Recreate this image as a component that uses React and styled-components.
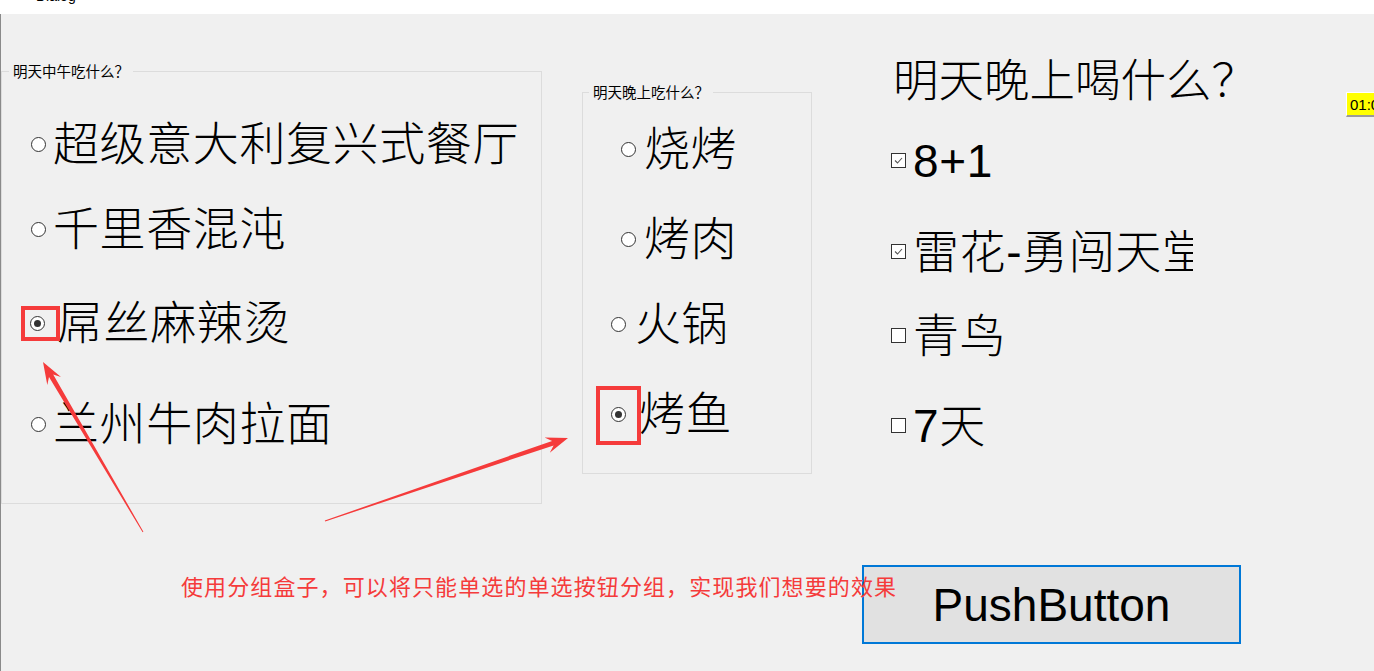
import React from "react";
import styled, { createGlobalStyle } from "styled-components";

const Global = createGlobalStyle`
  html, body { margin: 0; padding: 0; background: #f0f0f0; overflow: hidden; }
  * { box-sizing: border-box; }
`;

const FONT = `"Liberation Sans", "Noto Sans CJK SC", sans-serif`;

const Window = styled.div`
  position: relative;
  width: 1374px;
  height: 671px;
  overflow: hidden;
  display: flex;
  flex-direction: column;
  background: #f0f0f0;
  font-family: ${FONT};
  color: #000;
`;

const TitleBar = styled.div`
  flex: none;
  height: 14px;
  background: #fff;
  overflow: hidden;
`;

const TitleInner = styled.div`
  height: 22px;
  margin-top: -20px;
  display: flex;
  align-items: flex-end;
  padding-left: 10px;
`;

const AppIcon = styled.div`
  width: 18px;
  height: 16px;
  border: 1px solid #a8a8a8;
  background: #fff;
  margin-bottom: 2px;
`;

const TitleText = styled.span`
  margin-left: 8px;
  font-size: 14px;
  line-height: 1;
  font-family: "Liberation Sans", sans-serif;
  margin-bottom: -1px;
`;

const CloseGlyph = styled.span`
  margin-left: auto;
  margin-right: 42px;
  font-size: 13px;
  line-height: 1;
`;

const Content = styled.div`
  position: relative;
  flex: 1;
  border-left: 1px solid #8a8a8a;
  display: flex;
  flex-direction: column;
`;

const TopRow = styled.div`
  display: flex;
  align-items: flex-start;
`;

const GroupBox = styled.div`
  position: relative;
  flex: none;
  width: ${(p) => p.$w}px;
  height: ${(p) => p.$h}px;
  margin-top: ${(p) => p.$mt}px;
  margin-left: ${(p) => p.$ml}px;
  border: 1px solid #dcdcdc;
  display: flex;
  flex-direction: column;
`;

const GroupTitle = styled.span`
  position: absolute;
  top: -10px;
  left: ${(p) => p.$left}px;
  padding: 0 4px;
  background: #f0f0f0;
  font-family: "Noto Sans CJK SC", sans-serif;
  font-size: 14.5px;
  line-height: 18px;
  color: #000;
`;

const Row = styled.div`
  flex: none;
  height: 46px;
  display: flex;
  align-items: center;
  margin-top: ${(p) => p.$mt}px;
  padding-left: ${(p) => p.$pl || 0}px;
`;

const Radio = styled.span`
  position: relative;
  flex: none;
  width: 15px;
  height: 15px;
  border-radius: 50%;
  border: 1px solid #333;
  background: #fff;
  &::after {
    content: "";
    display: ${(p) => (p.$checked ? "block" : "none")};
    position: absolute;
    inset: 3px;
    border-radius: 50%;
    background: #333;
  }
`;

const CheckBox = styled.span`
  flex: none;
  width: 15px;
  height: 15px;
  border: 1px solid #333;
  background: #fff;
  display: flex;
  align-items: center;
  justify-content: center;
`;

const Label = styled.span`
  flex: none;
  margin-left: ${(p) => p.$gap}px;
  font-size: 46px;
  line-height: 1;
  font-weight: 300;
  letter-spacing: 0.6px;
  white-space: nowrap;
`;

const RightColumn = styled.div`
  flex: none;
  margin-left: 79px;
  display: flex;
  flex-direction: column;
`;

const Heading = styled.div`
  margin-top: 45px;
  margin-left: 2px;
  font-size: 45.5px;
  line-height: 1;
  font-weight: 300;
  white-space: nowrap;
`;

const CheckRow = styled(Row)`
  width: 302px;
  height: 60px;
  overflow: hidden;
`;

const Timer = styled.div`
  position: absolute;
  top: 78px;
  left: 1345px;
  height: 25px;
  padding: 0 3px;
  display: flex;
  align-items: center;
  background: #ffff00;
  border-top: 1px solid #fff;
  border-left: 1px solid #fff;
  border-bottom: 2px solid #9a9a9a;
  font-size: 15px;
  font-family: "Liberation Sans", sans-serif;
  white-space: nowrap;
`;

const BottomRow = styled.div`
  display: flex;
  align-items: flex-start;
  margin-top: 61px;
`;

const Note = styled.div`
  position: relative;
  z-index: 1;
  flex: 1 1 0;
  min-width: 0;
  margin-left: 180px;
  margin-top: 9px;
  font-family: "Noto Sans CJK SC", sans-serif;
  font-size: 22px;
  line-height: 1;
  color: #f53b3b;
  letter-spacing: 1.1px;
  white-space: nowrap;
`;

const PushButton = styled.button`
  flex: none;
  margin-right: 133px;
  width: 379px;
  height: 79px;
  border: 2px solid #0078d7;
  background: #e1e1e1;
  font-family: "Liberation Sans", sans-serif;
  font-size: 46px;
  color: #000;
  padding: 0;
  cursor: default;
`;

const Overlay = styled.svg`
  position: absolute;
  top: 0;
  left: 0;
  width: 1374px;
  height: 671px;
  pointer-events: none;
  z-index: 5;
`;

function arrowPoints(x1, y1, x2, y2) {
  const dx = x2 - x1;
  const dy = y2 - y1;
  const len = Math.hypot(dx, dy);
  const ux = dx / len;
  const uy = dy / len;
  const nx = -uy;
  const ny = ux;
  const L = 22;
  const W = 8;
  const w = 2.4;
  const bx = x2 - ux * L;
  const by = y2 - uy * L;
  const sx = x2 - ux * (L - 6);
  const sy = y2 - uy * (L - 6);
  const pts = [
    [x1 + nx * 0.5, y1 + ny * 0.5],
    [sx + nx * w, sy + ny * w],
    [bx + nx * W, by + ny * W],
    [x2, y2],
    [bx - nx * W, by - ny * W],
    [sx - nx * w, sy - ny * w],
    [x1 - nx * 0.5, y1 - ny * 0.5],
  ];
  return pts.map((p) => p.map((v) => v.toFixed(1)).join(",")).join(" ");
}

const CheckMark = () => (
  <svg width="11" height="11" viewBox="0 0 11 11">
    <polyline points="2,5.5 4.5,8 9,3" fill="none" stroke="#555" strokeWidth="1.1" />
  </svg>
);

const lunch = [
  { text: "超级意大利复兴式餐厅", mt: 49, pl: 29, gap: 7 },
  { text: "千里香混沌", mt: 39, pl: 29, gap: 7 },
  { text: "屌丝麻辣烫", mt: 48, pl: 28, gap: 12, checked: true },
  { text: "兰州牛肉拉面", mt: 55, pl: 29, gap: 7 },
];

const dinner = [
  { text: "烧烤", mt: 33, pl: 38, gap: 8 },
  { text: "烤肉", mt: 44, pl: 38, gap: 8 },
  { text: "火锅", mt: 39, pl: 28, gap: 9 },
  { text: "烤鱼", mt: 44, pl: 28, gap: 13, checked: true },
];

const drinks = [
  { text: "8+1", mt: 26, checked: true },
  { text: "雷花-勇闯天堂", mt: 31, checked: true },
  { text: "青鸟", mt: 24 },
  { text: "7天", mt: 30 },
];

export default function App() {
  return (
    <>
      <Global />
      <Window>
        <TitleBar>
          <TitleInner>
            <AppIcon />
            <TitleText>Dialog</TitleText>
            <CloseGlyph>✕</CloseGlyph>
          </TitleInner>
        </TitleBar>
        <Content>
          <TopRow>
            <GroupBox $w={541} $h={433} $mt={57} $ml={0}>
              <GroupTitle $left={7}>明天中午吃什么？</GroupTitle>
              {lunch.map((r) => (
                <Row key={r.text} $mt={r.mt} $pl={r.pl}>
                  <Radio $checked={r.checked} />
                  <Label $gap={r.gap}>{r.text}</Label>
                </Row>
              ))}
            </GroupBox>
            <GroupBox $w={230} $h={382} $mt={78} $ml={40}>
              <GroupTitle $left={6}>明天晚上吃什么？</GroupTitle>
              {dinner.map((r) => (
                <Row key={r.text} $mt={r.mt} $pl={r.pl}>
                  <Radio $checked={r.checked} />
                  <Label $gap={r.gap}>{r.text}</Label>
                </Row>
              ))}
            </GroupBox>
            <RightColumn>
              <Heading>明天晚上喝什么？</Heading>
              {drinks.map((r) => (
                <CheckRow key={r.text} $mt={r.mt}>
                  <CheckBox>{r.checked && <CheckMark />}</CheckBox>
                  <Label $gap={7}>{r.text}</Label>
                </CheckRow>
              ))}
            </RightColumn>
          </TopRow>
          <BottomRow>
            <Note>使用分组盒子，可以将只能单选的单选按钮分组，实现我们想要的效果</Note>
            <PushButton>PushButton</PushButton>
          </BottomRow>
          <Timer>01:00:00</Timer>
        </Content>
        <Overlay viewBox="0 0 1374 671">
          <rect x="23" y="308" width="35" height="31" fill="none" stroke="#f53b3b" strokeWidth="4" />
          <rect x="598" y="388" width="41" height="55" fill="none" stroke="#f53b3b" strokeWidth="4" />
          <polygon points={arrowPoints(143, 532, 43, 362)} fill="#f53b3b" />
          <polygon points={arrowPoints(325, 521, 568, 438)} fill="#f53b3b" />
        </Overlay>
      </Window>
    </>
  );
}
